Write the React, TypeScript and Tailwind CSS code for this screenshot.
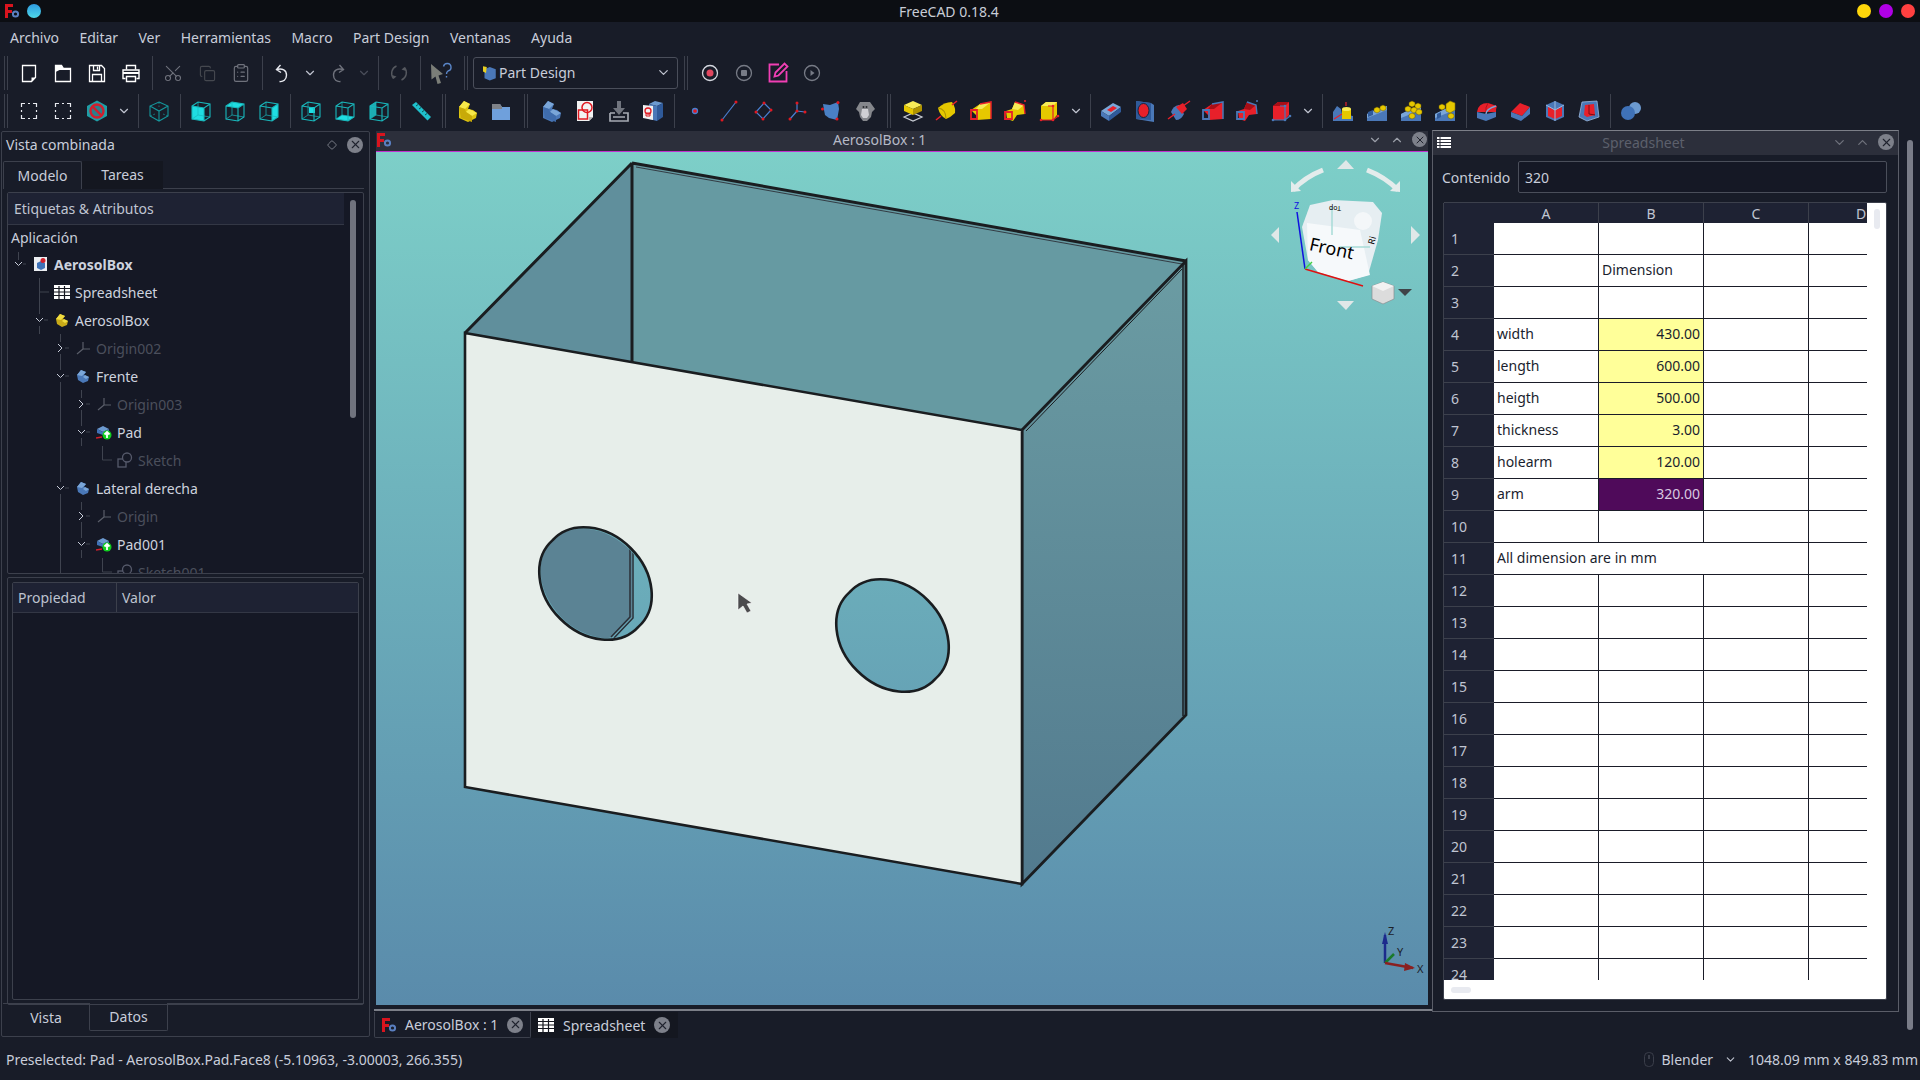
import type { ReactNode } from 'react';
import { ChevronDown, ChevronUp, ClipboardList, Copy, Diamond, Scissors, X } from 'lucide-react';

const menus = ['Archivo', 'Editar', 'Ver', 'Herramientas', 'Macro', 'Part Design', 'Ventanas', 'Ayuda'];

function FoLogo() {
  return (
    <svg width="16" height="16" viewBox="0 0 16 16">
      <path d="M1 1h8v3H4v3h4v3H4v5H1z" fill="#d9141e" />
      <circle cx="11.5" cy="11" r="2.6" fill="none" stroke="#5a7fc0" strokeWidth="2" />
    </svg>
  );
}

function CloseDot({ size = 16 }: { size?: number }) {
  return (
    <span className="flex items-center justify-center rounded-full bg-[#7d808a]" style={{ width: size, height: size }}>
      <X size={size - 3} strokeWidth={2} className="text-[#20232e]" />
    </span>
  );
}

function Btn({ children }: { children: ReactNode }) {
  return <div className="flex h-[34px] w-[34px] shrink-0 items-center justify-center">{children}</div>;
}

function Chev({ dim }: { dim?: boolean }) {
  return (
    <div className="flex h-[34px] w-[20px] shrink-0 items-center justify-center">
      <ChevronDown size={14} className={dim ? 'text-[#4a4e5a]' : 'text-[#bfc3cf]'} />
    </div>
  );
}

function Sep() {
  return (
    <div className="flex h-[34px] w-[8px] shrink-0 items-center justify-center">
      <div className="h-[34px] w-px bg-[#3c404c]" />
    </div>
  );
}

function Grip({ width }: { width: string }) {
  return (
    <div className={`flex h-[34px] shrink-0 items-center justify-center gap-[2px] ${width}`}>
      <div className="h-[34px] w-px bg-[#3c404c]" />
      <div className="h-[34px] w-px bg-[#3c404c]" />
    </div>
  );
}

function Ico({ children }: { children: ReactNode }) {
  return (
    <svg width="24" height="24" viewBox="0 0 24 24">
      {children}
    </svg>
  );
}

function NewDoc() {
  return (
    <Ico>
      <path d="M5.500 4.500h13v12l-4 4h-9z" fill="none" stroke="#fff" strokeWidth="1.300" />
      <path d="M14.500 20.500v-4h4z" fill="#fff" />
    </Ico>
  );
}

function OpenDoc() {
  return (
    <Ico>
      <path d="M4.500 4.500h6l2 3h7v13h-15z" fill="none" stroke="#fff" strokeWidth="1.300" />
      <path d="M4.500 4.500h6l2 3h7v1.500h-11l-4 2z" fill="#fff" />
    </Ico>
  );
}

function SaveDoc() {
  return (
    <Ico>
      <path d="M4.500 4.500h12l3 3v13h-15z" fill="none" stroke="#fff" strokeWidth="1.300" />
      <path d="M8.500 4.500v5h6v-5M7.500 20.500v-7h9v7M12.500 5.500v3" fill="none" stroke="#fff" strokeWidth="1.300" />
    </Ico>
  );
}

function PrintDoc() {
  return (
    <Ico>
      <path d="M7.500 8.500v-4h9v4" fill="none" stroke="#fff" strokeWidth="1.400" />
      <path d="M6.500 17.500h-2.500v-8.500h16v8.500h-2.500" fill="none" stroke="#fff" strokeWidth="1.400" />
      <path d="M4 11h16v2H4z" fill="#fff" />
      <path d="M7.500 15.500h9v5h-9z" fill="#181c28" stroke="#fff" strokeWidth="1.400" />
    </Ico>
  );
}

function UndoIcon({ color, flip }: { color: string; flip?: boolean }) {
  return (
    <Ico>
      <g transform={flip ? 'translate(24 0) scale(-1 1)' : undefined}>
        <path d="M9.500 4L5.500 8.500l4.500 3M5.500 8.500c6-1.500 10 .5 10 5.500s-3.500 7-7 6.500" fill="none" stroke={color} strokeWidth="1.400" />
      </g>
    </Ico>
  );
}

function RefreshIcon() {
  return (
    <Ico>
      <path d="M6.500 17.500a8 8 0 0 1 3-12.500M17.500 6.500a8 8 0 0 1-3 12.500" fill="none" stroke="#55585f" strokeWidth="1.400" />
      <path d="M5 14l1.500 4 3-2.500zM19 10l-1.500-4-3 2.500z" fill="#55585f" />
    </Ico>
  );
}

function WhatsThis() {
  return (
    <Ico>
      <path d="M2 3l12 10-4.500 1.500L12 22l-3.500 1-2-7.500-4 3z" fill="#7b7e78" />
      <path d="M14.500 5.500a3.800 3.800 0 1 1 4.500 4.500c-1 .6-1.500 1.200-1.500 3M17.500 15v1.500" fill="none" stroke="#5a86c8" strokeWidth="1.400" />
    </Ico>
  );
}

function RingIcon({ kind }: { kind: 'rec' | 'stop' | 'play' }) {
  return (
    <Ico>
      <circle cx="12" cy="12" r="7.500" fill="none" stroke={kind === 'rec' ? '#d5d8e0' : '#777b86'} strokeWidth="1.300" />
      {kind === 'rec' && <circle cx="12" cy="12" r="3.500" fill="#e0475f" />}
      {kind === 'stop' && <rect x="9" y="9" width="6" height="6" rx="1" fill="#777b86" />}
      {kind === 'play' && <path d="M10.500 9l4 3-4 3z" fill="#777b86" />}
    </Ico>
  );
}

function MacroEdit() {
  return (
    <Ico>
      <path d="M13 3.500H3.500v17h17V10" fill="none" stroke="#f13fb4" strokeWidth="1.800" />
      <path d="M8.500 15.500l1-4 9-9 3 3-9 9z" fill="none" stroke="#f13fb4" strokeWidth="1.800" />
    </Ico>
  );
}

function Selection() {
  return (
    <Ico>
      <path
        d="M4.500 8V4.500H8M16 4.500h3.500V8M19.500 16v3.500H16M8 19.500H4.500V16M11 4.500h2M11 19.500h2M4.500 11v2M19.500 11v2"
        fill="none"
        stroke="#e8eaf0"
        strokeWidth="1.200"
      />
    </Ico>
  );
}

function NoEntry() {
  return (
    <Ico>
      <path d="M12 1.500l10 5.500v10l-10 5.500L2 17V7z" fill="#1f9ea6" />
      <circle cx="12" cy="12" r="6.500" fill="#2a7f8c" stroke="#d01f2e" strokeWidth="2.400" />
      <path d="M7.500 7.500l9 9" stroke="#d01f2e" strokeWidth="2.400" />
    </Ico>
  );
}

type Face = 'none' | 'front' | 'top' | 'right' | 'rear' | 'bottom' | 'left';

function ViewCube({ face }: { face: Face }) {
  const f = '#1fdde2';
  if (face === 'none') {
    return (
      <Ico>
        <path d="M12 3l9 4v10l-9 5-9-5V7zM3 7l9 5 9-5M12 12v10" fill="none" stroke="#15969c" strokeWidth="1.100" />
        <path d="M12 3v5M3 17l5-2M21 17l-5-2" fill="none" stroke="#15969c" strokeWidth="0.700" strokeDasharray="2 1.500" />
      </Ico>
    );
  }
  return (
    <Ico>
      {face === 'front' && <path d="M3 7l12 2v13L3 20z" fill={f} />}
      {face === 'top' && <path d="M3 7l6-4 12 2-6 4z" fill={f} />}
      {face === 'right' && <path d="M15 9l6-4v13l-6 4z" fill={f} />}
      {face === 'rear' && <path d="M10 8h6v6h-6z" fill={f} />}
      {face === 'bottom' && <path d="M3 20l6-4 12 2-6 4z" fill={f} />}
      {face === 'left' && <path d="M3 7l6-4v13l-6 4z" fill={f} opacity="0.75" />}
      <path d="M3 7l6-4 12 2v13l-6 4-12-2zM3 7l12 2 6-4M15 9v13" fill="none" stroke="#19b8bc" strokeWidth="1.100" />
      <path d="M9 3v13M3 20l6-4 12 2" fill="none" stroke="#19b8bc" strokeWidth="0.700" />
    </Ico>
  );
}

function Ruler() {
  return (
    <Ico>
      <path d="M3 6l4-3 15 15-3.500 3.500z" fill="#1fc0cc" />
      <path d="M7 7l2-1.500M10 10l2-1.500M13 13l2-1.500M16 16l2-1.500" stroke="#0b5755" strokeWidth="1" />
    </Ico>
  );
}

function Body({ light, mid, dark }: { light: string; mid: string; dark: string }) {
  return (
    <Ico>
      <path d="M4 8l5-6 6 3-2 5 5 1 4 3-1 5-8 4-9-4z" fill={mid} />
      <path d="M4 8l5-6 6 3-5 5z" fill={light} />
      <path d="M11 13l3-3 8 4-5 3z" fill={light} />
      <path d="M4 8l6 2 1 3 6 4v6l-11-4z" fill={dark} />
    </Ico>
  );
}

function Folder() {
  return (
    <Ico>
      <path d="M3 5h8l2 3h8v13H3z" fill="#6fa0dc" />
      <path d="M3 5h8l2 3v2H3z" fill="#7f8288" />
    </Ico>
  );
}

function SketchPage() {
  return (
    <Ico>
      <path d="M4 2h16v16l-4 4H4z" fill="#f2f2f2" />
      <path d="M16 22v-4h4z" fill="#b8b8b8" />
      <rect x="5.500" y="11" width="9" height="9" fill="none" stroke="#e01820" strokeWidth="1.500" />
      <circle cx="14" cy="8.500" r="5" fill="none" stroke="#e01820" strokeWidth="1.500" />
    </Ico>
  );
}

function ImportTray() {
  return (
    <Ico>
      <path d="M3 14v8h18v-8h-5M8 14H3M6 18h12" fill="none" stroke="#a5a9b2" strokeWidth="1.700" />
      <path d="M10 2h4v7h4l-6 7-6-7h4z" fill="#71757f" />
    </Ico>
  );
}

function BoxPage() {
  return (
    <Ico>
      <path d="M8 5l6-3 8 2-6 3z" fill="#6c9ad0" />
      <path d="M16 7l6-3v14l-6 4z" fill="#2f5a9a" />
      <path d="M8 5l8 2v15l-8-2z" fill="#4a78b8" />
      <path d="M2 6l10 1v14l-10-2z" fill="#f0f0f0" />
      <circle cx="7" cy="12" r="3" fill="none" stroke="#e01820" strokeWidth="1.300" />
      <path d="M5 14h4v3H5z" fill="none" stroke="#e01820" strokeWidth="1" />
    </Ico>
  );
}

function Dots({ d, pts }: { d: string; pts: number[][] }) {
  return (
    <Ico>
      <path d={d} fill="none" stroke="#4a7fd0" strokeWidth="1.200" />
      {pts.map(([x, y]) => (
        <circle key={`${x}-${y}`} cx={x} cy={y} r="1.500" fill="#e01820" />
      ))}
    </Ico>
  );
}

function Blob() {
  return (
    <Ico>
      <path d="M4 5l7 1 8-3 1 7-2 11-8-2-4-3-1-5z" fill="#4a80c4" />
      <circle cx="19" cy="3.500" r="1.500" fill="#e01820" />
      <circle cx="18" cy="20" r="1.500" fill="#e01820" />
      <circle cx="3.500" cy="10" r="1.500" fill="#e01820" />
    </Ico>
  );
}

function Sheep() {
  return (
    <Ico>
      <path d="M7 3h10l5 7-3 3-1 5-4 4h-4l-3-4-1-5-3-3z" fill="#85878c" />
      <path d="M9 10h6l1 6-2 3h-4l-2-3z" fill="#d0d0d4" />
      <circle cx="10.500" cy="8" r="1" fill="#2a2c30" />
      <circle cx="13.500" cy="8" r="1" fill="#2a2c30" />
    </Ico>
  );
}

const Y1 = '#f8ec58';
const Y2 = '#e6c800';
const Y3 = '#b09400';
const R1 = '#e8202a';
const R2 = '#a80e16';
const B1 = '#7aa6d8';
const B2 = '#4a78b8';
const B3 = '#2f5a9a';

function PadIcon() {
  return (
    <Ico>
      <path d="M3 18l9-4 9 4-9 4z" fill="none" stroke="#c8ccd4" strokeWidth="1.200" />
      <path d="M12 2l9 4-9 4-9-4z" fill={Y1} />
      <path d="M3 6l9 4v6l-9-4z" fill={Y2} />
      <path d="M12 10l9-4v6l-9 4z" fill={Y3} />
    </Ico>
  );
}

function RevolveIcon() {
  return (
    <Ico>
      <path d="M3 9q6-6 14-6 4 6 3 11-4 4-9 6-6-3-8-11z" fill={Y2} />
      <path d="M3 9q8 1 8 11" fill="none" stroke={Y3} strokeWidth="1.200" />
      <path d="M1 21l5-4M17 6l5-4" stroke={R1} strokeWidth="1.600" />
    </Ico>
  );
}

function LoftIcon({ color, rim, top }: { color: string; rim: string; top: string }) {
  return (
    <Ico>
      <path d="M2 11l9-6 11-2v17l-14 1-1-5z" fill={color} />
      <path d="M7 10l4-5 11-2-9 7z" fill={top} />
      <path d="M2 11h6v9H2z" fill="none" stroke={rim} strokeWidth="1.800" />
      <path d="M11 5l11-2v17" fill="none" stroke={rim} strokeWidth="1.500" />
    </Ico>
  );
}

function PipeIcon({ color, rim, top }: { color: string; rim: string; top: string }) {
  return (
    <Ico>
      <path d="M3 12l6-2 3-7 9 3 1 9-8 1-4 6-6-2z" fill={color} />
      <path d="M9 10l3-7 9 3-6 5z" fill={top} />
      <path d="M2 13h7v7H2z" fill="none" stroke={rim} strokeWidth="1.800" />
      <path d="M12 3l9 3 1 9" fill="none" stroke={rim} strokeWidth="1.400" />
      <circle cx="22" cy="2" r="1" fill={rim} />
    </Ico>
  );
}

function DatumBox({ face, top, edge }: { face: string; top: string; edge: string }) {
  return (
    <Ico>
      <path d="M4 7l5-4h11v13l-4 5H4z" fill={face} />
      <path d="M4 7l5-4h11l-4 4z" fill={top} />
      <path d="M16 7v14M4 21h12l5-4M16 7h-5" fill="none" stroke={edge} strokeWidth="1.200" />
      <circle cx="16" cy="7" r="1.300" fill={edge} />
      <circle cx="16" cy="21" r="1.300" fill={edge} />
      <circle cx="4" cy="21" r="1.300" fill={edge} />
      <circle cx="21" cy="17" r="1.300" fill={edge} />
    </Ico>
  );
}

function PocketIcon() {
  return (
    <Ico>
      <path d="M2 12l12-8 8 4-12 9z" fill={B1} />
      <path d="M2 12l8 5v5l-8-5z" fill={B2} />
      <path d="M10 17l12-9v5l-12 9z" fill={B3} />
      <path d="M8 11l6-4 4 2-6 4z" fill={R1} />
    </Ico>
  );
}

function HoleIcon() {
  return (
    <Ico>
      <path d="M3 2l15 2 3 2v17l-18-3z" fill={B2} />
      <path d="M3 2l15 2v17l-15-1z" fill={B3} />
      <ellipse cx="10.500" cy="11.500" rx="5.500" ry="7" fill={R1} stroke="#152440" strokeWidth="1" />
    </Ico>
  );
}

function GrooveIcon() {
  return (
    <Ico>
      <path d="M4 13q2-6 8-7l5 9q-3 6-8 6z" fill={B2} />
      <path d="M9 8l7-4 4 6-5 5z" fill={R1} />
      <path d="M1 20l7-5M16 7l7-5" stroke={R1} strokeWidth="1.500" />
    </Ico>
  );
}

function MirrorIcon() {
  return (
    <Ico>
      <path d="M2 22v-9l4-6 4 3 1 5 11 2v5z" fill={B2} />
      <path d="M11 10h9v10h-9z" fill={Y2} />
      <ellipse cx="15.500" cy="10" rx="4.500" ry="2" fill={Y1} />
      <path d="M3 20l8-5M15 3v4" stroke={R1} strokeWidth="1.200" />
    </Ico>
  );
}

function SmallCube({ x, y }: { x: number; y: number }) {
  return (
    <g transform={`translate(${x} ${y})`}>
      <path d="M0 1.500l3-1.500 3 1.500v3L3 6 0 4.500z" fill={Y2} stroke="#6a5800" strokeWidth="0.500" />
    </g>
  );
}

function PatternIcon({ kind }: { kind: 'linear' | 'polar' | 'multi' }) {
  return (
    <Ico>
      <path d="M2 22v-7l10-5 10-3v15z" fill={B2} />
      <path d="M2 15l10-5 10-3v4l-20 8z" fill={B1} />
      {kind === 'linear' && (
        <>
          <SmallCube x={9} y={8} />
          <SmallCube x={15} y={6} />
          <path d="M3 13l5-2v5l-5 2z" fill={B3} />
        </>
      )}
      {kind === 'polar' && (
        <>
          <SmallCube x={10} y={2} />
          <SmallCube x={16} y={4} />
          <SmallCube x={6} y={7} />
          <SmallCube x={12} y={8} />
          <SmallCube x={17} y={10} />
          <SmallCube x={10} y={14} />
        </>
      )}
      {kind === 'multi' && (
        <>
          <path d="M13 5l4-3 5 2v7l-5 3-4-2z" fill={Y2} stroke="#8a7500" strokeWidth="0.600" />
          <SmallCube x={6} y={5} />
          <SmallCube x={15} y={14} />
          <path d="M4 15l4-2v5l-4 2z" fill={B3} />
        </>
      )}
    </Ico>
  );
}

function FilletIcon() {
  return (
    <Ico>
      <path d="M2 13q1-9 11-9l9 3q-1 2-1 6z" fill={R1} />
      <path d="M2 13l9 2 10-2v5l-10 4-9-3z" fill={B2} />
      <path d="M13 4q-3 4-2 11" stroke={R2} strokeWidth="0.800" fill="none" />
      <path d="M11 15q0-5 10-8" stroke={B1} strokeWidth="1.400" fill="none" />
    </Ico>
  );
}

function ChamferIcon() {
  return (
    <Ico>
      <path d="M2 13l9-9 10 4-8 9z" fill={R1} />
      <path d="M2 13l11 4 8-9v7l-9 7-10-4z" fill={B2} />
    </Ico>
  );
}

function DraftIcon() {
  return (
    <Ico>
      <path d="M12 2l9 4v12l-9 4-9-4V6z" fill={B2} />
      <path d="M5 8l7 3 7-3v9l-7 3-7-3z" fill={R1} />
      <path d="M12 2v20M3 6l9 5 9-5" fill="none" stroke="#9ab8dc" strokeWidth="1" />
    </Ico>
  );
}

function ThickIcon() {
  return (
    <Ico>
      <path d="M5 3l15-1 2 16-12 4-8-4z" fill={B2} stroke="#9ab8dc" strokeWidth="0.800" />
      <path d="M8 6l9-1 1 11-8 2-3-2z" fill={R1} />
      <path d="M12 6v9l6 1" stroke="#7a0a12" strokeWidth="1" fill="none" />
    </Ico>
  );
}

function BoolIcon() {
  return (
    <Ico>
      <circle cx="16" cy="9" r="6" fill="#6c9ad0" />
      <circle cx="9" cy="14" r="7" fill="#3f72b8" />
    </Ico>
  );
}

function Toolbars() {
  return (
    <>
      <div className="flex h-[34px] items-center">
        <Grip width="w-[12px]" />
        <Btn><NewDoc /></Btn>
        <Btn><OpenDoc /></Btn>
        <Btn><SaveDoc /></Btn>
        <Btn><PrintDoc /></Btn>
        <Sep />
        <Btn><Scissors size={20} strokeWidth={1.3} className="-rotate-90 text-[#6f727c]" /></Btn>
        <Btn><Copy size={17} strokeWidth={1.6} className="text-[#45484f]" /></Btn>
        <Btn><ClipboardList size={20} strokeWidth={1.4} className="text-[#6f727c]" /></Btn>
        <Sep />
        <Btn><UndoIcon color="#e8eaf0" /></Btn>
        <Chev />
        <Btn><UndoIcon color="#6f727c" flip /></Btn>
        <Chev dim />
        <Sep />
        <Btn><RefreshIcon /></Btn>
        <Sep />
        <Btn><WhatsThis /></Btn>
        <Grip width="w-[15px]" />
        <div className="flex h-[32px] w-[205px] shrink-0 items-center rounded-[3px] border border-[#4a4e5a] pb-[1px] pl-[6px] pr-[6px] text-[14px] text-[#c8cdda]">
          <svg width="18" height="18" viewBox="0 0 24 24" className="mr-[1px]">
            <path d="M6 7l7-3 8 3v12l-8 3-7-3z" fill="#4a78b8" />
            <path d="M4 3l5 1-1 8-4-2z" fill="#e8d020" />
          </svg>
          <span className="flex-1">Part Design</span>
          <ChevronDown size={15} className="text-[#bfc3cf]" />
        </div>
        <Grip width="w-[15px]" />
        <Btn><RingIcon kind="rec" /></Btn>
        <Btn><RingIcon kind="stop" /></Btn>
        <Btn><MacroEdit /></Btn>
        <Btn><RingIcon kind="play" /></Btn>
      </div>
      <div className="mt-[4px] flex h-[34px] items-center">
        <Grip width="w-[12px]" />
        <Btn><Selection /></Btn>
        <Btn><Selection /></Btn>
        <Btn><NoEntry /></Btn>
        <Chev />
        <Sep />
        <Btn><ViewCube face="none" /></Btn>
        <Sep />
        <Btn><ViewCube face="front" /></Btn>
        <Btn><ViewCube face="top" /></Btn>
        <Btn><ViewCube face="right" /></Btn>
        <Sep />
        <Btn><ViewCube face="rear" /></Btn>
        <Btn><ViewCube face="bottom" /></Btn>
        <Btn><ViewCube face="left" /></Btn>
        <Sep />
        <Btn><Ruler /></Btn>
        <Grip width="w-[12px]" />
        <Btn><Body light="#f6e84a" mid="#dcc410" dark="#c8aa08" /></Btn>
        <Btn><Folder /></Btn>
        <Grip width="w-[16px]" />
        <Btn><Body light="#7aa6d8" mid="#4a78b8" dark="#3f6cac" /></Btn>
        <Btn><SketchPage /></Btn>
        <Btn><ImportTray /></Btn>
        <Btn><BoxPage /></Btn>
        <Sep />
        <Btn>
          <Ico>
            <circle cx="12" cy="12" r="2.500" fill="#e01820" stroke="#4a7fd0" strokeWidth="1.300" />
          </Ico>
        </Btn>
        <Btn><Dots d="M5 21L19 3" pts={[[5, 21], [19, 3]]} /></Btn>
        <Btn><Dots d="M13 4l7 7-8 9-7-7z" pts={[[13, 4], [20, 11], [12, 20], [5, 13]]} /></Btn>
        <Btn><Dots d="M12 12V4M12 12l8 1M12 12l-7 8" pts={[[12, 4], [20, 13], [5, 20], [12, 12]]} /></Btn>
        <Btn><Blob /></Btn>
        <Btn><Sheep /></Btn>
        <Grip width="w-[14px]" />
        <Btn><PadIcon /></Btn>
        <Btn><RevolveIcon /></Btn>
        <Btn><LoftIcon color={Y2} rim={R1} top={Y1} /></Btn>
        <Btn><PipeIcon color={Y2} rim={R1} top={Y1} /></Btn>
        <Btn><DatumBox face={Y2} top={Y1} edge={R1} /></Btn>
        <Chev />
        <Sep />
        <Btn><PocketIcon /></Btn>
        <Btn><HoleIcon /></Btn>
        <Btn><GrooveIcon /></Btn>
        <Btn><LoftIcon color={R1} rim={B2} top={R2} /></Btn>
        <Btn><PipeIcon color={R1} rim={B2} top={R2} /></Btn>
        <Btn><DatumBox face={R1} top={R2} edge={B2} /></Btn>
        <Chev />
        <Sep />
        <Btn><MirrorIcon /></Btn>
        <Btn><PatternIcon kind="linear" /></Btn>
        <Btn><PatternIcon kind="polar" /></Btn>
        <Btn><PatternIcon kind="multi" /></Btn>
        <Sep />
        <Btn><FilletIcon /></Btn>
        <Btn><ChamferIcon /></Btn>
        <Btn><DraftIcon /></Btn>
        <Btn><ThickIcon /></Btn>
        <Sep />
        <Btn><BoolIcon /></Btn>
      </div>
    </>
  );
}

type Conn = 'pipe' | 'tee' | 'ell' | 'open' | 'closed' | 'blank' | 'root';

function Connector({ kind }: { kind: Conn }) {
  const line = '#3f434f';
  return (
    <svg width="21" height="28" className="shrink-0">
      {kind === 'pipe' && <path d="M10.500 0v28" stroke={line} />}
      {kind === 'tee' && <path d="M10.500 0v28M10.500 14H20" stroke={line} fill="none" />}
      {kind === 'ell' && <path d="M10.500 0v14H20" stroke={line} fill="none" />}
      {kind === 'root' && <path d="M10.500 2v8M15 14h3" stroke={line} fill="none" />}
      {(kind === 'open' || kind === 'closed') && <path d="M10.500 0v8M10.500 20v8M15 14h4" stroke={line} fill="none" />}
      {(kind === 'open' || kind === 'root') && <path d="M7 12l3.500 3.500L14 12" stroke="#c8cdda" fill="none" />}
      {kind === 'closed' && <path d="M8 10l4 4-4 4" stroke="#c8cdda" fill="none" />}
    </svg>
  );
}

function OriginIcon() {
  return (
    <svg width="16" height="16" viewBox="0 0 16 16" className="shrink-0">
      <path d="M8 2v7M8 9h7M8 9l-6 5" stroke="#5a5e6a" strokeWidth="1.200" fill="none" />
    </svg>
  );
}

function DocIcon() {
  return (
    <svg width="16" height="16" viewBox="0 0 16 16" className="shrink-0">
      <rect x="1" y="1" width="13" height="14" fill="#eceef2" />
      <path d="M4 7l4-2 4 2v5l-4 2-4-2z" fill="#3f72b8" />
      <circle cx="10" cy="4.500" r="2.500" fill="#d0202c" />
    </svg>
  );
}

function SheetIcon({ color = '#fff' }: { color?: string }) {
  return (
    <svg width="16" height="14" viewBox="0 0 16 14" className="shrink-0">
      <rect width="16" height="14" fill={color} />
      <path d="M0 3.500h16M0 7h16M0 10.500h16M5 1v13M10.500 1v13" stroke="#14161f" strokeWidth="1.200" />
    </svg>
  );
}

function TreeBody({ light, dark }: { light: string; dark: string }) {
  return (
    <svg width="16" height="16" viewBox="0 0 16 16" className="shrink-0">
      <path d="M2 7l4-5 5 2-2 3 5 2-1 4-5 2-5-3z" fill={dark} />
      <path d="M2 7l4-5 5 2-4 4zM8 9l2-2 4 2-3 2z" fill={light} />
    </svg>
  );
}

function PadTree() {
  return (
    <svg width="16" height="16" viewBox="0 0 16 16" className="shrink-0">
      <path d="M1 5l6-3 6 3-6 3z" fill="#6c9ad0" />
      <path d="M1 5l6 3v3l-6-2z" fill="#3f72b8" />
      <path d="M7 8l6-3v3l-6 3z" fill="#4a78b8" />
      <path d="M0 14l6-1" stroke="#d0202c" strokeWidth="1.500" />
      <circle cx="11" cy="11" r="4.500" fill="#10d020" />
      <path d="M11 8v6M8.500 10.500L11 8l2.500 2.500" stroke="#fff" strokeWidth="1.800" fill="none" />
    </svg>
  );
}

function SketchTree() {
  return (
    <svg width="16" height="16" viewBox="0 0 16 16" className="shrink-0">
      <rect x="1" y="7" width="8" height="8" fill="none" stroke="#55596a" strokeWidth="1.300" />
      <circle cx="10" cy="5.500" r="4.500" fill="#151825" stroke="#55596a" strokeWidth="1.300" />
    </svg>
  );
}

type TreeRow = {
  label: string;
  cols: Conn[];
  icon: ReactNode;
  dim?: boolean;
  bold?: boolean;
};

const blueBody = <TreeBody light="#7aa6d8" dark="#4a78b8" />;

const treeRows: TreeRow[] = [
  { label: 'AerosolBox', cols: ['root'], icon: <DocIcon />, bold: true },
  { label: 'Spreadsheet', cols: ['blank', 'tee'], icon: <SheetIcon /> },
  { label: 'AerosolBox', cols: ['blank', 'open'], icon: <TreeBody light="#f0dc40" dark="#c8aa18" /> },
  { label: 'Origin002', cols: ['blank', 'blank', 'closed'], icon: <OriginIcon />, dim: true },
  { label: 'Frente', cols: ['blank', 'blank', 'open'], icon: blueBody },
  { label: 'Origin003', cols: ['blank', 'blank', 'pipe', 'closed'], icon: <OriginIcon />, dim: true },
  { label: 'Pad', cols: ['blank', 'blank', 'pipe', 'open'], icon: <PadTree /> },
  { label: 'Sketch', cols: ['blank', 'blank', 'pipe', 'blank', 'ell'], icon: <SketchTree />, dim: true },
  { label: 'Lateral derecha', cols: ['blank', 'blank', 'open'], icon: blueBody },
  { label: 'Origin', cols: ['blank', 'blank', 'pipe', 'closed'], icon: <OriginIcon />, dim: true },
  { label: 'Pad001', cols: ['blank', 'blank', 'pipe', 'open'], icon: <PadTree /> },
  { label: 'Sketch001', cols: ['blank', 'blank', 'pipe', 'blank', 'ell'], icon: <SketchTree />, dim: true },
];

function LeftDock() {
  return (
    <div className="ml-px mt-px flex h-[906px] w-[369px] shrink-0 flex-col rounded-[2px] border border-[#3c404c] px-[5px]">
      <div className="-ml-px flex h-[27px] shrink-0 items-center justify-between pb-[2px]">
        <span className="text-[14px] text-[#c8cdda]">Vista combinada</span>
        <div className="flex items-center gap-[10px] pr-[1px]">
          <Diamond size={10} className="text-[#8a8e98]" />
          <CloseDot />
        </div>
      </div>
      <div className="-ml-[4px] mt-[2px] flex h-[28px] shrink-0">
        <div className="flex w-[79px] items-center justify-center rounded-t-[2px] border border-b-0 border-[#3c404c] pb-[1px] text-[14px] text-[#c8cdda]">
          Modelo
        </div>
        <div className="flex w-[81px] items-center justify-center bg-[#141720] pb-[1px] text-[14px] text-[#c8cdda]">
          Tareas
        </div>
        <div className="flex-1 border-b border-[#3c404c]" />
      </div>
      <div className="mt-[3px] flex h-[382px] shrink-0 overflow-hidden rounded-[2px] border border-[#3c404c] bg-[#151825]">
        <div className="w-[336px] shrink-0">
          <div className="flex h-[32px] items-center border-b border-[#333745] bg-[#1e2233] pl-[6px] text-[14px] text-[#c0c5d2]">
            Etiquetas &amp; Atributos
          </div>
          <div className="flex h-[25px] items-center pl-[3px] text-[14px] text-[#c8cdda]">Aplicación</div>
          {treeRows.map((row, i) => (
            <div key={i} className="flex h-[28px] items-center">
              {row.cols.map((c, j) => (
                <Connector key={j} kind={c} />
              ))}
              <span className="ml-[4px] flex">{row.icon}</span>
              <span
                className={`ml-[5px] whitespace-nowrap text-[14px] ${row.dim ? 'text-[#4b4f5c]' : 'text-[#cdd2de]'} ${row.bold ? 'font-bold' : ''}`}
              >
                {row.label}
              </span>
            </div>
          ))}
        </div>
        <div className="ml-[6px] mt-[7px] h-[218px] w-[6px] rounded-full bg-[#70737e]" />
      </div>
      <div className="mt-[3px] flex h-[428px] shrink-0 rounded-[2px] border border-[#3c404c] p-[4px]">
        <div className="flex-1 rounded-[2px] border border-[#3c404c] bg-[#151825]">
          <div className="flex h-[30px] border-b border-[#333745] bg-[#1e2233] text-[14px] text-[#bdc2cf]">
            <div className="flex w-[104px] items-center border-r border-[#3c404c] pl-[5px]">Propiedad</div>
            <div className="flex items-center pl-[5px]">Valor</div>
          </div>
        </div>
      </div>
      <div className="-ml-[4px] -mt-[2px] flex h-[28px] shrink-0">
        <div className="flex w-[86px] items-center justify-center border-t border-[#3c404c] text-[14px] text-[#c8cdda]">
          Vista
        </div>
        <div className="flex w-[79px] items-center justify-center rounded-b-[2px] border border-t-0 border-[#3c404c] text-[14px] text-[#c8cdda]">
          Datos
        </div>
        <div className="flex-1 border-t border-[#3c404c]" />
      </div>
    </div>
  );
}

function Scene() {
  return (
    <svg viewBox="376 152 1052 853" className="h-full w-full">
      <defs>
        <clipPath id="leftHole">
          <ellipse cx="595.500" cy="583.500" rx="61" ry="48" transform="rotate(45 595.500 583.500)" />
        </clipPath>
        <linearGradient id="rightWall" gradientUnits="userSpaceOnUse" x1="0" y1="261" x2="0" y2="884">
          <stop offset="0" stopColor="#6b9ca3" />
          <stop offset="1" stopColor="#527a8e" />
        </linearGradient>
      </defs>
      {/* inside of the box */}
      <path d="M632 163L1186 261L1022 430L632 363Z" fill="#669aa2" />
      <path d="M465 333L632 163L632 363Z" fill="#608f9c" />
      <path d="M632 163L1186 261M465 333L632 163M632 163V363" stroke="#1a1d20" strokeWidth="3" fill="none" />
      <path d="M636 167L1182 264" stroke="#333c44" strokeWidth="1" fill="none" />
      <path d="M1022 430L1186 261V715L1022 884Z" fill="url(#rightWall)" stroke="#1a1d20" strokeWidth="2.800" />
      <path d="M1183 263V716" stroke="#1a1d20" strokeWidth="1.500" />
      <path d="M1026 431L1182 269" stroke="#1a1d20" strokeWidth="1" />
      {/* far wall seen through the left hole */}
      <path d="M530 520H632V617L612 637L560 650L530 640Z" fill="#5b8394" clipPath="url(#leftHole)" />
      <path d="M630 520V617L611 637M633 520V618L614 638" stroke="#2a2e36" strokeWidth="1.500" fill="none" clipPath="url(#leftHole)" />
      {/* front wall with two holes */}
      <path
        d="M465 333L1022 430V884L465 787ZM552.400 540.400A61 48 45 1 0 638.600 626.600A61 48 45 1 0 552.400 540.400ZM849.400 592.400A61 48 45 1 0 935.600 678.600A61 48 45 1 0 849.400 592.400Z"
        fill="#e7eeea"
        fillRule="evenodd"
        stroke="#1a1d20"
        strokeWidth="2.600"
      />
      <path d="M738 593V610L743 606L747 613L751 611L747 604L752 603Z" fill="#4b4b4d" stroke="#fff" strokeWidth="0.600" />
      {/* navigation cube */}
      <path d="M1323 170Q1305 177 1293 190" stroke="#e4ecec" strokeWidth="5" fill="none" />
      <path d="M1291 192V181L1301 191Z" fill="#e4ecec" />
      <path d="M1367 170Q1385 177 1398 190" stroke="#e4ecec" strokeWidth="5" fill="none" />
      <path d="M1400 192V181L1390 191Z" fill="#e4ecec" />
      <path d="M1346 160L1337 169H1354ZM1337 301H1354L1346 310ZM1279 227V243L1271 235ZM1411 226V244L1420 235Z" fill="#e0e8e8" />
      <path d="M1310 205L1333 200L1373 202L1382 213L1378 240L1368 275L1348 281L1318 272L1308 260L1302 227Z" fill="#e6eef2" />
      <path d="M1307 223L1360 230L1370 275L1348 281L1318 272L1308 260Z" fill="#f6f9fb" />
      <path d="M1332 207V235M1340 247H1370" stroke="#a8dcd8" strokeWidth="1.500" />
      <circle cx="1363" cy="221" r="9" fill="#f4f7f9" />
      <path d="M1297 212L1305 269" stroke="#1010e0" strokeWidth="1.500" />
      <path d="M1305 269L1363 286" stroke="#e01010" strokeWidth="1.500" />
      <path d="M1305 269L1312 262" stroke="#40d040" strokeWidth="1.500" />
      <text x="1294" y="209" fontSize="9" fill="#1010e0">Z</text>
      <text x="1309" y="255" fontSize="18" fill="#000" transform="rotate(12 1332 250)">Front</text>
      <text x="1345" y="206" fontSize="7" fill="#000" transform="rotate(180 1343 206)">Top</text>
      <text x="1374" y="245" fontSize="9" fill="#000" transform="rotate(-75 1374 245)">Ri</text>
      <path d="M1383 282L1394 286V299L1383 304L1372 299V286Z" fill="#dcdcdc" stroke="#8a8e90" strokeWidth="0.700" />
      <path d="M1372 286L1383 291L1394 286L1383 282Z" fill="#f2f2f2" />
      <path d="M1398 289H1412L1405 296Z" fill="#3f4448" />
      {/* corner axes */}
      <path d="M1385 963V935" stroke="#1c2a8c" strokeWidth="2.500" />
      <path d="M1385 932L1388 944H1382Z" fill="#1c2a8c" />
      <path d="M1385 963L1394 954" stroke="#1a7a2a" strokeWidth="2.500" />
      <path d="M1385 963L1413 968" stroke="#8a2020" strokeWidth="2.500" />
      <path d="M1415 968L1404 971L1405 963Z" fill="#8a2020" />
      <text x="1388" y="935" fontSize="11" fill="#1c2028">Z</text>
      <text x="1397" y="956" fontSize="11" fill="#1c2028">Y</text>
      <text x="1417" y="973" fontSize="11" fill="#1c2028">X</text>
    </svg>
  );
}

function Center() {
  return (
    <div className="ml-[4px] flex w-[1058px] shrink-0 flex-col">
      <div className="mt-px flex h-[880px] shrink-0 flex-col border-b-[2px] border-[#7c7f88] pl-[2px] pr-[4px]">
        <div className="flex h-[20px] shrink-0 items-center bg-[#2c2f3b] pb-[3px]">
          <FoLogo />
          <span className="ml-[441px] text-[14px] text-[#b5b9c6]">AerosolBox : 1</span>
          <div className="ml-auto flex items-center gap-[8px] pr-[1px]">
            <ChevronDown size={14} className="text-[#9a9ea8]" />
            <ChevronUp size={14} className="text-[#9a9ea8]" />
            <CloseDot size={15} />
          </div>
        </div>
        <div className="h-px shrink-0 bg-[#c030d0]" />
        <div className="h-[853px] shrink-0 bg-gradient-to-b from-[#7dcfc8] to-[#5a8bab]">
          <Scene />
        </div>
      </div>
      <div className="mt-[1px] flex h-[26px] shrink-0">
        <div className="flex w-[157px] items-center rounded-b-[2px] border border-t-0 border-[#3c404c] pl-[6px] text-[14px] text-[#c8cdda]">
          <FoLogo />
          <span className="ml-[8px] mr-[9px]">AerosolBox : 1</span>
          <CloseDot />
        </div>
        <div className="flex w-[147px] items-center bg-[#141720] pl-[7px] text-[14px] text-[#c8cdda]">
          <SheetIcon />
          <span className="ml-[9px] mr-[9px]">Spreadsheet</span>
          <CloseDot />
        </div>
      </div>
    </div>
  );
}

const cellValues: Record<string, { text: string; kind?: 'num' | 'hi' }> = {
  B2: { text: 'Dimension' },
  A4: { text: 'width' },
  B4: { text: '430.00', kind: 'num' },
  A5: { text: 'length' },
  B5: { text: '600.00', kind: 'num' },
  A6: { text: 'heigth' },
  B6: { text: '500.00', kind: 'num' },
  A7: { text: 'thickness' },
  B7: { text: '3.00', kind: 'num' },
  A8: { text: 'holearm' },
  B8: { text: '120.00', kind: 'num' },
  A9: { text: 'arm' },
  B9: { text: '320.00', kind: 'hi' },
  A11: { text: 'All dimension are in mm' },
};

const sheetRows = Array.from({ length: 24 }, (_, i) => i + 1);

function SheetCell({ col, row }: { col: string; row: number }) {
  const cell = cellValues[`${col}${row}`];
  const bg = cell?.kind === 'num' ? 'bg-[#ffff99] text-[#1a1e2e]' : cell?.kind === 'hi' ? 'bg-[#4f0a5a] text-[#d8c8e0]' : 'bg-white text-[#1a1e2e]';
  const merged = row === 11 && col !== 'C' && col !== 'D';
  return (
    <div
      className={`flex h-full w-[105px] shrink-0 items-center whitespace-nowrap border-b border-[#1a1c28] px-[3px] pb-[2px] text-[14px] ${bg} ${
        merged ? '' : 'border-r'
      } ${cell?.kind ? 'justify-end' : ''} ${row === 11 && col === 'A' ? 'relative z-10' : ''}`}
    >
      {cell?.text}
    </div>
  );
}

function RightPanel() {
  return (
    <div className="flex h-[882px] w-[467px] shrink-0 flex-col border border-[#5a5d68] border-t-[#7c7f88]">
      <div className="flex h-[24px] shrink-0 items-center bg-[#2c2f3b] pb-[2px] pl-[4px] pr-[4px]">
        <svg width="14" height="11" viewBox="0 0 14 11">
          <path d="M0 0h14v2H0zM0 3h14v2H0zM0 6h14v2H0zM0 9h14v2H0z" fill="#fff" />
          <path d="M3 0v11" stroke="#2c2f3b" />
        </svg>
        <span className="flex-1 pl-[4px] text-center text-[14px] text-[#5c606c]">Spreadsheet</span>
        <div className="flex items-center gap-[8px]">
          <ChevronDown size={15} className="text-[#6f727c]" />
          <ChevronUp size={15} className="text-[#6f727c]" />
          <CloseDot />
        </div>
      </div>
      <div className="mt-[6px] flex h-[32px] shrink-0 items-center pl-[9px]">
        <span className="w-[76px] text-[14px] text-[#c8cdda]">Contenido</span>
        <div className="flex h-[32px] w-[369px] items-center rounded-[2px] border border-[#4a4e5a] bg-[#151825] pl-[6px] text-[14px] text-[#c8cdda]">
          320
        </div>
      </div>
      <div className="ml-[10px] mt-[9px] flex h-[798px] w-[444px] flex-col rounded-[2px] border border-[#3c404c] bg-white">
        <div className="flex h-[777px] shrink-0">
          <div className="w-[423px] shrink-0 overflow-hidden">
            <div className="flex h-[20px] bg-[#1e2233] text-[14px] text-[#c0c5d2]">
              <div className="w-[50px] shrink-0" />
              <div className="flex w-[105px] shrink-0 items-center justify-center border-r border-[#3c404c]">A</div>
              <div className="flex w-[105px] shrink-0 items-center justify-center border-r border-[#3c404c]">B</div>
              <div className="flex w-[105px] shrink-0 items-center justify-center border-r border-[#3c404c]">C</div>
              <div className="flex w-[105px] shrink-0 items-center pl-[47px]">D</div>
            </div>
            {sheetRows.map((row) => (
              <div key={row} className="flex h-[32px]">
                <div className="flex w-[50px] shrink-0 items-center border-b border-[#3c404c] bg-[#1e2233] pl-[7px] text-[14px] text-[#c0c5d2]">
                  {row}
                </div>
                <SheetCell col="A" row={row} />
                <SheetCell col="B" row={row} />
                <SheetCell col="C" row={row} />
                <SheetCell col="D" row={row} />
              </div>
            ))}
          </div>
          <div className="ml-[7px] mt-[6px] h-[20px] w-[6px] rounded-full bg-[#e8eaf0]" />
        </div>
        <div className="ml-[7px] mt-[7px] h-[6px] w-[20px] rounded-full bg-[#e8eaf0]" />
      </div>
    </div>
  );
}

export default function App() {
  return (
    <div className="flex h-[1080px] w-[1920px] flex-col overflow-hidden bg-[#181c28] font-['Noto_Sans',sans-serif]">
      <div className="flex h-[22px] shrink-0 items-center bg-[#0c0e13] pl-[4px] pr-[5px]">
        <FoLogo />
        <span className="ml-[7px] h-[14px] w-[14px] rounded-full bg-gradient-to-b from-[#2f9ae0] to-[#4fd8e8]" />
        <span className="ml-[858px] text-[14px] text-[#c8ccd6]">FreeCAD 0.18.4</span>
        <div className="ml-auto flex items-center gap-[8px]">
          <span className="h-[14px] w-[14px] rounded-full bg-[#ffd60a]" />
          <span className="h-[14px] w-[14px] rounded-full bg-[#b000e6]" />
          <span className="h-[14px] w-[14px] rounded-full bg-[#ff4040]" />
        </div>
      </div>
      <div className="flex h-[34px] shrink-0 items-center gap-[20.4px] pb-[3px] pl-[10px] text-[14px] text-[#c8cdda]">
        {menus.map((m) => (
          <span key={m}>{m}</span>
        ))}
      </div>
      <Toolbars />
      <div className="mt-[2px] flex h-[910px] shrink-0">
        <LeftDock />
        <Center />
        <RightPanel />
        <div className="ml-[8px] mt-[10px] h-[890px] w-[6px] rounded-full bg-[#7a7d88]" />
      </div>
      <div className="flex flex-1 items-center justify-between pb-[2px] pl-[6px] pr-[2px] text-[14px] text-[#c8cdda]">
        <span>Preselected: Pad - AerosolBox.Pad.Face8 (-5.10963, -3.00003, 266.355)</span>
        <div className="flex items-center">
          <svg width="10" height="15" viewBox="0 0 10 15">
            <rect x="0.500" y="0.500" width="9" height="14" rx="4" fill="none" stroke="#3a3e4a" />
            <rect x="4" y="3" width="2" height="4" fill="#3a3e4a" />
          </svg>
          <span className="ml-[8px]">Blender</span>
          <ChevronDown size={13} className="ml-[11px] text-[#bfc3cf]" />
          <span className="ml-[11px]">1048.09 mm x 849.83 mm</span>
        </div>
      </div>
    </div>
  );
}
